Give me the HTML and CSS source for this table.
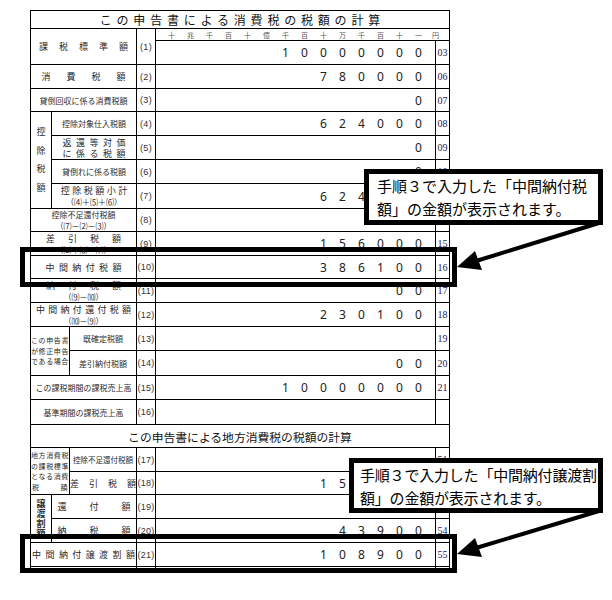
FILE: index.html
```html
<!DOCTYPE html>
<html lang="ja">
<head>
<meta charset="utf-8">
<link rel="stylesheet" href="styles.css">
</head>
<body>
<div class="page">
  <div class="clip">
    <div class="form">
      <div class="t1">この申告書による消費税の税額の計算</div>

      <div class="l s3 r2"><span class="ln ls11">課税標準額</span></div>
      <div class="n r2">(1)</div>
      <div class="hdr"><span>十</span><span>兆</span><span>千</span><span>百</span><span>十</span><span>億</span><span>千</span><span>百</span><span>十</span><span>万</span><span>千</span><span>百</span><span>十</span><span>一</span><span class="yen">円</span></div>
      <div class="d"><span>1</span><span>0</span><span>0</span><span>0</span><span>0</span><span>0</span><span>0</span><span>0</span></div>
      <div class="k">03</div>

      <div class="l s3"><span class="ln ls16">消費税額</span></div>
      <div class="n">(2)</div>
      <div class="d"><span>7</span><span>8</span><span>0</span><span>0</span><span>0</span><span>0</span></div>
      <div class="k">06</div>

      <div class="l s3 f8">貸倒回収に係る消費税額</div>
      <div class="n">(3)</div>
      <div class="d"><span>0</span></div>
      <div class="k">07</div>

      <div class="l r4 g1">控<br>除<br>税<br>額</div>
      <div class="l s2 f8">控除対象仕入税額</div>
      <div class="n">(4)</div>
      <div class="d"><span>6</span><span>2</span><span>4</span><span>0</span><span>0</span><span>0</span></div>
      <div class="k">08</div>

      <div class="l s2"><span class="ln ls5">返還等対価</span><span class="ln ls5">に係る税額</span></div>
      <div class="n">(5)</div>
      <div class="d"><span>0</span></div>
      <div class="k">09</div>

      <div class="l s2 f8">貸倒れに係る税額</div>
      <div class="n">(6)</div>
      <div class="d"><span>0</span></div>
      <div class="k">10</div>

      <div class="l s2"><span class="ln ls2">控除税額小計</span><span class="ln f8">（⑷＋⑸＋⑹）</span></div>
      <div class="n">(7)</div>
      <div class="d"><span>6</span><span>2</span><span>4</span><span>0</span><span>0</span><span>0</span></div>
      <div class="k">11</div>

      <div class="l s3"><span class="ln f8">控除不足還付税額</span><span class="ln f8">（⑺－⑵－⑶）</span></div>
      <div class="n">(8)</div>
      <div class="d"></div>
      <div class="k">13</div>

      <div class="l s3"><span class="ln ls13">差引税額</span><span class="ln f8">（⑵＋⑶－⑺）</span></div>
      <div class="n">(9)</div>
      <div class="d"><span>1</span><span>5</span><span>6</span><span>0</span><span>0</span><span>0</span></div>
      <div class="k">15</div>

      <div class="l s3"><span class="ln ls4">中間納付税額</span></div>
      <div class="n">(10)</div>
      <div class="d"><span>3</span><span>8</span><span>6</span><span>1</span><span>0</span><span>0</span></div>
      <div class="k">16</div>

      <div class="l s3"><span class="ln ls13">納付税額</span><span class="ln f8">（⑼－⑽）</span></div>
      <div class="n">(11)</div>
      <div class="d"><span>0</span><span>0</span></div>
      <div class="k">17</div>

      <div class="l s3"><span class="ln ls3">中間納付還付税額</span><span class="ln f8">（⑽－⑼）</span></div>
      <div class="n">(12)</div>
      <div class="d"><span>2</span><span>3</span><span>0</span><span>1</span><span>0</span><span>0</span></div>
      <div class="k">18</div>

      <div class="l s2 r2 g2">この申告書<br>が修正申告<br>である場合</div>
      <div class="l f8">既確定税額</div>
      <div class="n">(13)</div>
      <div class="d"></div>
      <div class="k">19</div>

      <div class="l f8">差引納付税額</div>
      <div class="n">(14)</div>
      <div class="d"><span>0</span><span>0</span></div>
      <div class="k">20</div>

      <div class="l s3 f8">この課税期間の課税売上高</div>
      <div class="n">(15)</div>
      <div class="d"><span>1</span><span>0</span><span>0</span><span>0</span><span>0</span><span>0</span><span>0</span><span>0</span></div>
      <div class="k">21</div>

      <div class="l s3 f8">基準期間の課税売上高</div>
      <div class="n">(16)</div>
      <div class="d"></div>
      <div class="k"></div>

      <div class="t2">この申告書による地方消費税の税額の計算</div>

      <div class="l s2 r2 g2"><span class="ln">地方消費税</span><span class="ln">の課税標準</span><span class="ln">となる消費</span><span class="ln jl"><span>税</span><span>額</span></span></div>
      <div class="l f7">控除不足還付税額</div>
      <div class="n">(17)</div>
      <div class="d"></div>
      <div class="k">51</div>

      <div class="l"><span class="ln ls10">差引税額</span></div>
      <div class="n">(18)</div>
      <div class="d"><span>1</span><span>5</span><span>6</span><span>0</span><span>0</span><span>0</span></div>
      <div class="k">52</div>

      <div class="l r2 g3">譲<br>渡<br>割<br>額</div>
      <div class="l s2"><span class="jw"><span>還</span><span>付</span><span>額</span></span></div>
      <div class="n">(19)</div>
      <div class="d"></div>
      <div class="k">53</div>

      <div class="l s2"><span class="jw"><span>納</span><span>税</span><span>額</span></span></div>
      <div class="n">(20)</div>
      <div class="d"><span>4</span><span>3</span><span>9</span><span>0</span><span>0</span></div>
      <div class="k">54</div>

      <div class="l s3"><span class="ln ls4">中間納付譲渡割額</span></div>
      <div class="n">(21)</div>
      <div class="d"><span>1</span><span>0</span><span>8</span><span>9</span><span>0</span><span>0</span></div>
      <div class="k">55</div>

      <div class="l s3 top"><span class="ln ls4">納付譲渡割額</span></div>
      <div class="n"></div>
      <div class="d"></div>
      <div class="k"></div>
    </div>
  </div>

  <div class="hl hl1"></div>
  <div class="hl hl2"></div>

  <div class="callout c1">手順３で入力した「中間納付税<br>額」の金額が表示されます。</div>
  <div class="callout c2">手順３で入力した「中間納付譲渡割<br>額」の金額が表示されます。</div>

  <svg class="arrows" width="612" height="600" viewBox="0 0 612 600">
    <line x1="599" y1="223" x2="476" y2="261" stroke="#000" stroke-width="4"/>
    <polygon points="457,267 482,270 475,251" fill="#000"/>
    <line x1="599" y1="511" x2="476" y2="548" stroke="#000" stroke-width="4"/>
    <polygon points="457,554 482,557 475,538" fill="#000"/>
  </svg>
</div>
</body>
</html>
```

FILE: styles.css
```css
* { box-sizing: border-box; }

body {
  margin: 0;
  background: #fff;
  font-family: "Noto Sans CJK JP", "Noto Sans", sans-serif;
}

.page {
  position: relative;
  width: 612px;
  height: 600px;
  overflow: hidden;
}

.clip {
  margin: 10px 0 0 30px;
  width: 420px;
  height: 562px;
  overflow: hidden;
}

.form {
  display: grid;
  grid-template-columns: 20px 17px 66px 18px 279px 13px;
  grid-template-rows: 17px 11px 23px 23px 22px 23px 23px 23px 24px 22px 23px 22px 23px 23px 23px 24px 23px 24px 22px 23px 22px 23px 23px 23px 23px;
  gap: 1px;
  padding: 1px;
  background: #000;
  width: 420px;
}

.form > div { background: #fff; }

.s2 { grid-column: span 2; }
.s3 { grid-column: span 3; }
.r2 { grid-row: span 2; }
.r4 { grid-row: span 4; }

.t1 {
  grid-column: span 6;
  display: flex;
  align-items: center;
  justify-content: center;
  font-size: 12px;
  letter-spacing: 4.8px;
  padding-left: 4.8px;
  color: #111;
}

.t2 {
  grid-column: span 6;
  display: flex;
  align-items: center;
  justify-content: center;
  font-size: 11.8px;
  color: #111;
}

.hdr {
  grid-column: span 2;
  display: flex;
  justify-content: flex-end;
  align-items: center;
  font-size: 7px;
  color: #555;
}
.hdr span { width: 19px; text-align: center; }
.hdr .yen { width: 21px; text-align: left; padding-left: 4px; }

.l {
  display: flex;
  flex-direction: column;
  align-items: center;
  justify-content: center;
  text-align: center;
  font-size: 9px;
  line-height: 11px;
  color: #2b2b2b;
  white-space: nowrap;
}
.l.top { justify-content: flex-start; padding-top: 1px; }
.ln { display: block; }

.f8 { font-size: 8px; }
.f7 { font-size: 7.5px; }
.ls2 { letter-spacing: 2.5px; margin-right: -2.5px; }
.ls3 { letter-spacing: 3.3px; margin-right: -3.3px; }
.ls4 { letter-spacing: 4.4px; margin-right: -4.4px; }
.ls5 { letter-spacing: 4.5px; margin-right: -4.5px; }
.ls10 { letter-spacing: 10px; margin-right: -10px; }
.ls11 { letter-spacing: 11px; margin-right: -11px; }
.ls13 { letter-spacing: 13px; margin-right: -13px; }
.ls16 { letter-spacing: 16px; margin-right: -16px; }

.jw {
  display: flex;
  justify-content: space-between;
  width: 73px;
}

.g1 { line-height: 18.5px; }
.g2 { font-size: 7px; line-height: 10.5px; letter-spacing: 0.6px; }
.g3 { font-size: 9px; line-height: 10px; font-weight: 700; }

.jl {
  display: flex;
  justify-content: space-between;
  width: 36px;
}

.n {
  display: flex;
  align-items: center;
  justify-content: center;
  font-family: "Liberation Sans", sans-serif;
  font-size: 9px;
  letter-spacing: 0.3px;
  color: #333;
}

.d {
  display: flex;
  justify-content: flex-end;
  align-items: center;
  padding-right: 7px;
  font-family: "Noto Sans", sans-serif;
  font-size: 12px;
  color: #222;
}
.d span { width: 19px; text-align: center; }

.k {
  display: flex;
  align-items: center;
  justify-content: center;
  font-family: "Liberation Serif", serif;
  font-size: 10px;
  color: #22224f;
}

.hl {
  position: absolute;
  border: 5px solid #000;
}
.hl1 { left: 20px; top: 247px; width: 437px; height: 40px; }
.hl2 { left: 20px; top: 534px; width: 437px; height: 39px; }

.callout {
  position: absolute;
  background: #fff;
  border: 5px solid #000;
  font-size: 15px;
  line-height: 23px;
  color: #000;
  white-space: nowrap;
  display: flex;
  align-items: center;
}
.c1 { left: 364px; top: 169px; width: 239px; height: 56px; padding-left: 8px; }
.c2 { left: 349px; top: 458px; width: 254px; height: 55px; padding-left: 6px; letter-spacing: -0.2px; }

.arrows {
  position: absolute;
  left: 0;
  top: 0;
  pointer-events: none;
}
```
